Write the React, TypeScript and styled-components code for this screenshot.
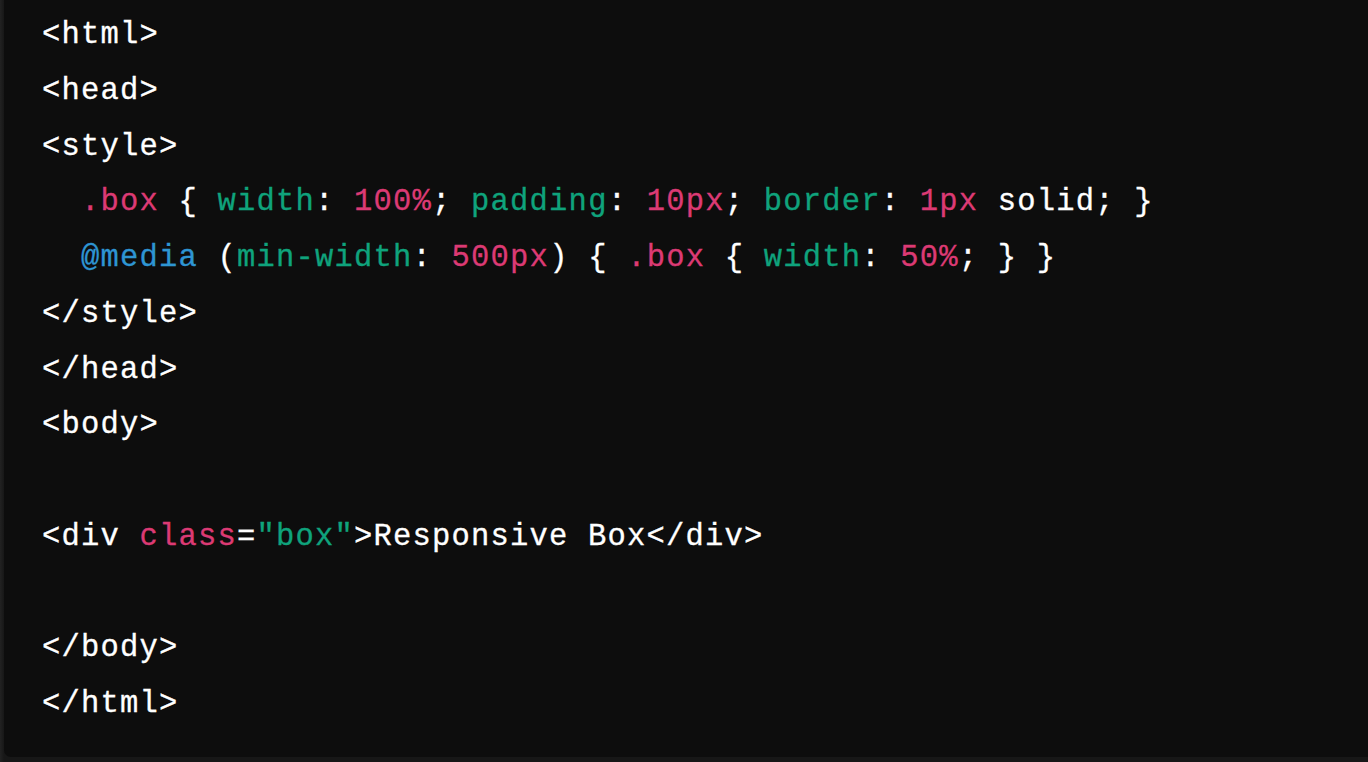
import React from "react";
import styled, { createGlobalStyle } from "styled-components";

const GlobalStyle = createGlobalStyle`
  html, body {
    margin: 0;
    padding: 0;
    background: #1c1c1c;
    overflow: hidden;
  }
  #root {
    width: 1368px;
    height: 762px;
  }
`;

const Page = styled.div`
  display: flex;
  width: 1368px;
  height: 762px;
  padding-left: 4px;
  padding-bottom: 5px;
  box-sizing: border-box;
  background: linear-gradient(90deg, #222 0, #171717 4px);
`;

const CodePanel = styled.div`
  flex: 1;
  background: #0d0d0d;
  border-bottom-left-radius: 7px;
  padding: 8px 0 0 38px;
  box-sizing: border-box;
  overflow: hidden;
`;

const Code = styled.pre`
  margin: 0;
  font-family: "Liberation Mono", "DejaVu Sans Mono", monospace;
  font-size: 30.5px;
  letter-spacing: 1.2px;
  line-height: 55.75px;
  color: #ffffff;
  white-space: pre;
  -webkit-text-stroke: 0.3px currentColor;
`;

const Line = styled.div`
  height: 55.75px;
`;

type Kind = "plain" | "pink" | "green" | "blue";

const colors: Record<Kind, string> = {
  plain: "#ffffff",
  pink: "#dc3a74",
  green: "#0fa37c",
  blue: "#2e95d3",
};

const Tok = styled.span<{ $kind: Kind }>`
  color: ${(p) => colors[p.$kind]};
`;

type Seg = [Kind, string];

const lines: Seg[][] = [
  [["plain", "<html>"]],
  [["plain", "<head>"]],
  [["plain", "<style>"]],
  [
    ["plain", "  "],
    ["pink", ".box"],
    ["plain", " { "],
    ["green", "width"],
    ["plain", ": "],
    ["pink", "100%"],
    ["plain", "; "],
    ["green", "padding"],
    ["plain", ": "],
    ["pink", "10px"],
    ["plain", "; "],
    ["green", "border"],
    ["plain", ": "],
    ["pink", "1px"],
    ["plain", " solid; }"],
  ],
  [
    ["plain", "  "],
    ["blue", "@media"],
    ["plain", " ("],
    ["green", "min-width"],
    ["plain", ": "],
    ["pink", "500px"],
    ["plain", ") { "],
    ["pink", ".box"],
    ["plain", " { "],
    ["green", "width"],
    ["plain", ": "],
    ["pink", "50%"],
    ["plain", "; } }"],
  ],
  [["plain", "</style>"]],
  [["plain", "</head>"]],
  [["plain", "<body>"]],
  [],
  [
    ["plain", "<div "],
    ["pink", "class"],
    ["plain", "="],
    ["green", '"box"'],
    ["plain", ">Responsive Box</div>"],
  ],
  [],
  [["plain", "</body>"]],
  [["plain", "</html>"]],
];

export default function App() {
  return (
    <>
      <GlobalStyle />
      <Page>
        <CodePanel>
          <Code>
            {lines.map((segs, i) => (
              <Line key={i}>
                {segs.map(([k, t], j) => (
                  <Tok key={j} $kind={k}>
                    {t}
                  </Tok>
                ))}
              </Line>
            ))}
          </Code>
        </CodePanel>
      </Page>
    </>
  );
}
